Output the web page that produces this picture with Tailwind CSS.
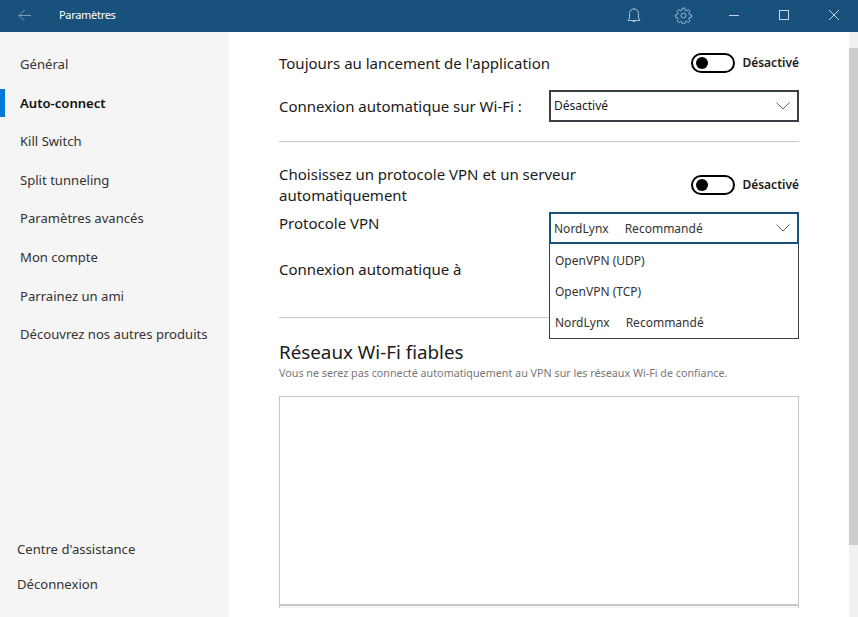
<!DOCTYPE html>
<html lang="fr">
<head>
    <meta charset="UTF-8">
    <title>Paramètres</title>
    <script src="https://cdn.jsdelivr.net/npm/@tailwindcss/browser@4"></script>
</head>
<body class="w-[858px] h-[617px] overflow-hidden bg-white flex flex-col font-['Noto_Sans','Open_Sans',sans-serif] text-[#1a1a1a]">
    <header class="h-8 shrink-0 bg-[#17517c] flex items-center text-white">
        <svg class="ml-[18px] w-[13px] h-[13px] -mt-[2px]" viewBox="0 0 13 13" fill="none" stroke="#7f9fb8" stroke-width="1"><path d="M13 6.5H1M6.5 1L1 6.5l5.5 5.5"/></svg>
        <span class="ml-[28px] text-[11px] tracking-[-0.3px] -mt-[2px]">Paramètres</span>
        <div class="ml-auto flex items-center -mt-[2px]">
            <svg class="w-[14px] h-[17px] mr-[34px]" viewBox="0 0 14 17" fill="none" stroke="#a9c0d2" stroke-width="1"><path d="M1 13.5h12l-1.5-2.5V6.500a4.500 4.500 0 0 0-9 0V11zM7 2V.8M5.300 13.500a1.800 1.800 0 0 0 3.400 0"/></svg>
            <svg class="w-[17px] h-[17px] mr-[37px]" viewBox="0 0 24 24" fill="none" stroke="#a9c0d2" stroke-width="1.300"><circle cx="12" cy="12" r="3.500"/><path d="M10.300 1.500h3.400l.6 3.100 1.900.8 2.600-1.800 2.400 2.400-1.800 2.600.8 1.900 3.100.6v3.400l-3.100.6-.8 1.900 1.800 2.600-2.400 2.400-2.600-1.800-1.900.8-.6 3.100h-3.400l-.6-3.100-1.900-.8-2.600 1.800-2.400-2.400 1.800-2.600-.8-1.900-3.100-.6v-3.400l3.100-.6.800-1.900-1.800-2.600 2.400-2.400 2.600 1.800 1.900-.8z"/></svg>
            <svg class="w-[10px] h-[10px] mr-[40px]" viewBox="0 0 10 10" stroke="#c5d4e0" stroke-width="1"><path d="M0 5.500h10"/></svg>
            <svg class="w-[10px] h-[10px] mr-[40px]" viewBox="0 0 10 10" fill="none" stroke="#c5d4e0" stroke-width="1"><rect x=".5" y=".5" width="9" height="9"/></svg>
            <svg class="w-[10px] h-[10px] mr-[19px]" viewBox="0 0 10 10" stroke="#c5d4e0" stroke-width="1"><path d="M0 0l10 10M10 0L0 10"/></svg>
        </div>
    </header>
    <div class="flex grow min-h-0">
        <aside class="w-[229px] shrink-0 bg-[#f5f5f5] flex flex-col text-[13.1px] text-[#333] pb-[22px]">
            <nav class="flex flex-col pt-[13.500px]">
                <a class="h-[38.600px] pl-5 flex items-center">Général</a>
                <a class="h-[38.600px] pl-5 flex items-center font-semibold text-[#111] relative"><span class="absolute left-0 top-[5px] w-[5px] h-[28px] bg-[#0078d7]"></span>Auto-connect</a>
                <a class="h-[38.600px] pl-5 flex items-center">Kill Switch</a>
                <a class="h-[38.600px] pl-5 flex items-center">Split tunneling</a>
                <a class="h-[38.600px] pl-5 flex items-center">Paramètres avancés</a>
                <a class="h-[38.600px] pl-5 flex items-center">Mon compte</a>
                <a class="h-[38.600px] pl-5 flex items-center">Parrainez un ami</a>
                <a class="h-[38.600px] pl-5 flex items-center">Découvrez nos autres produits</a>
            </nav>
            <div class="mt-auto flex flex-col pl-[17px] gap-[15px]">
                <a class="h-5 flex items-center">Centre d'assistance</a>
                <a class="h-5 flex items-center">Déconnexion</a>
            </div>
        </aside>
        <main class="grow min-w-0 relative pl-[50px] pr-[59px]">
            <section class="flex items-center justify-between h-[24px] mt-[19px]">
                <span class="text-[15px]">Toujours au lancement de l'application</span>
                <div class="flex items-center gap-[7px]">
                    <span class="w-11 h-5 rounded-full border-2 border-black flex items-center pl-[3px]"><span class="w-3 h-3 rounded-full bg-black"></span></span>
                    <span class="text-xs font-semibold">Désactivé</span>
                </div>
            </section>
            <section class="flex items-center justify-between mt-[15px]">
                <span class="text-[15px]">Connexion automatique sur Wi-Fi :</span>
                <div class="w-[250px] h-8 border-2 border-[#3a3f45] flex items-center justify-between pl-[3px] pr-[7px] text-xs">
                    <span>Désactivé</span>
                    <svg class="w-[14px] h-2" viewBox="0 0 14 8" fill="none" stroke="#666" stroke-width="1"><path d="M.5.500L7 7 13.500.500"/></svg>
                </div>
            </section>
            <div class="border-t border-[#c8c8c8] mt-[19px]"></div>
            <section class="flex items-center justify-between mt-[22px]">
                <span class="text-[15px] leading-[21px] w-[340px]">Choisissez un protocole VPN et un serveur automatiquement</span>
                <div class="flex items-center gap-[7px]">
                    <span class="w-11 h-5 rounded-full border-2 border-black flex items-center pl-[3px]"><span class="w-3 h-3 rounded-full bg-black"></span></span>
                    <span class="text-xs font-semibold">Désactivé</span>
                </div>
            </section>
            <section class="flex justify-between mt-[6px] h-[32px]">
                <span class="text-[15px] leading-[21px] pt-px">Protocole VPN</span>
                <div class="relative w-[250px]">
                    <div class="h-8 border-2 border-[#17517c] flex items-center justify-between pl-[3px] pr-[7px] text-xs text-[#333]">
                        <span class="flex gap-4 pt-px"><span>NordLynx</span><span>Recommandé</span></span>
                        <svg class="w-[14px] h-2" viewBox="0 0 14 8" fill="none" stroke="#666" stroke-width="1"><path d="M.5.500L7 7 13.500.500"/></svg>
                    </div>
                    <ul class="absolute left-0 top-8 z-10 w-full h-[95px] pt-px bg-white border border-[#3a3f45] border-t-0 text-xs text-[#333]">
                        <li class="h-[31px] pl-[5px] flex items-center">OpenVPN (UDP)</li>
                        <li class="h-[31px] pl-[5px] flex items-center">OpenVPN (TCP)</li>
                        <li class="h-[31px] pl-[5px] flex items-center gap-4"><span>NordLynx</span><span>Recommandé</span></li>
                    </ul>
                </div>
            </section>
            <p class="text-[15px] mt-[15px] leading-[21px]">Connexion automatique à</p>
            <div class="border-t border-[#c8c8c8] mt-[37px]"></div>
            <h2 class="text-[18.800px] leading-[26px] mt-[21px] mb-px">Réseaux Wi-Fi fiables</h2>
            <p class="text-[10.750px] leading-[14px] text-[#777]">Vous ne serez pas connecté automatiquement au VPN sur les réseaux Wi-Fi de confiance.</p>
            <div class="h-[212px] mt-[16px] border border-b-0 border-[#c8c8c8] flex flex-col justify-end"><div class="h-[2px] bg-[#c8c8c8]"></div><div class="h-[2px] bg-[#f5f5f5]"></div></div>
            <div class="absolute right-0 top-0 bottom-0 w-[9px] bg-[#f0f0f0] flex flex-col"><div class="mt-[16px] h-[497px] bg-[#cdcdcd]"></div></div>
        </main>
    </div>
</body>
</html>
